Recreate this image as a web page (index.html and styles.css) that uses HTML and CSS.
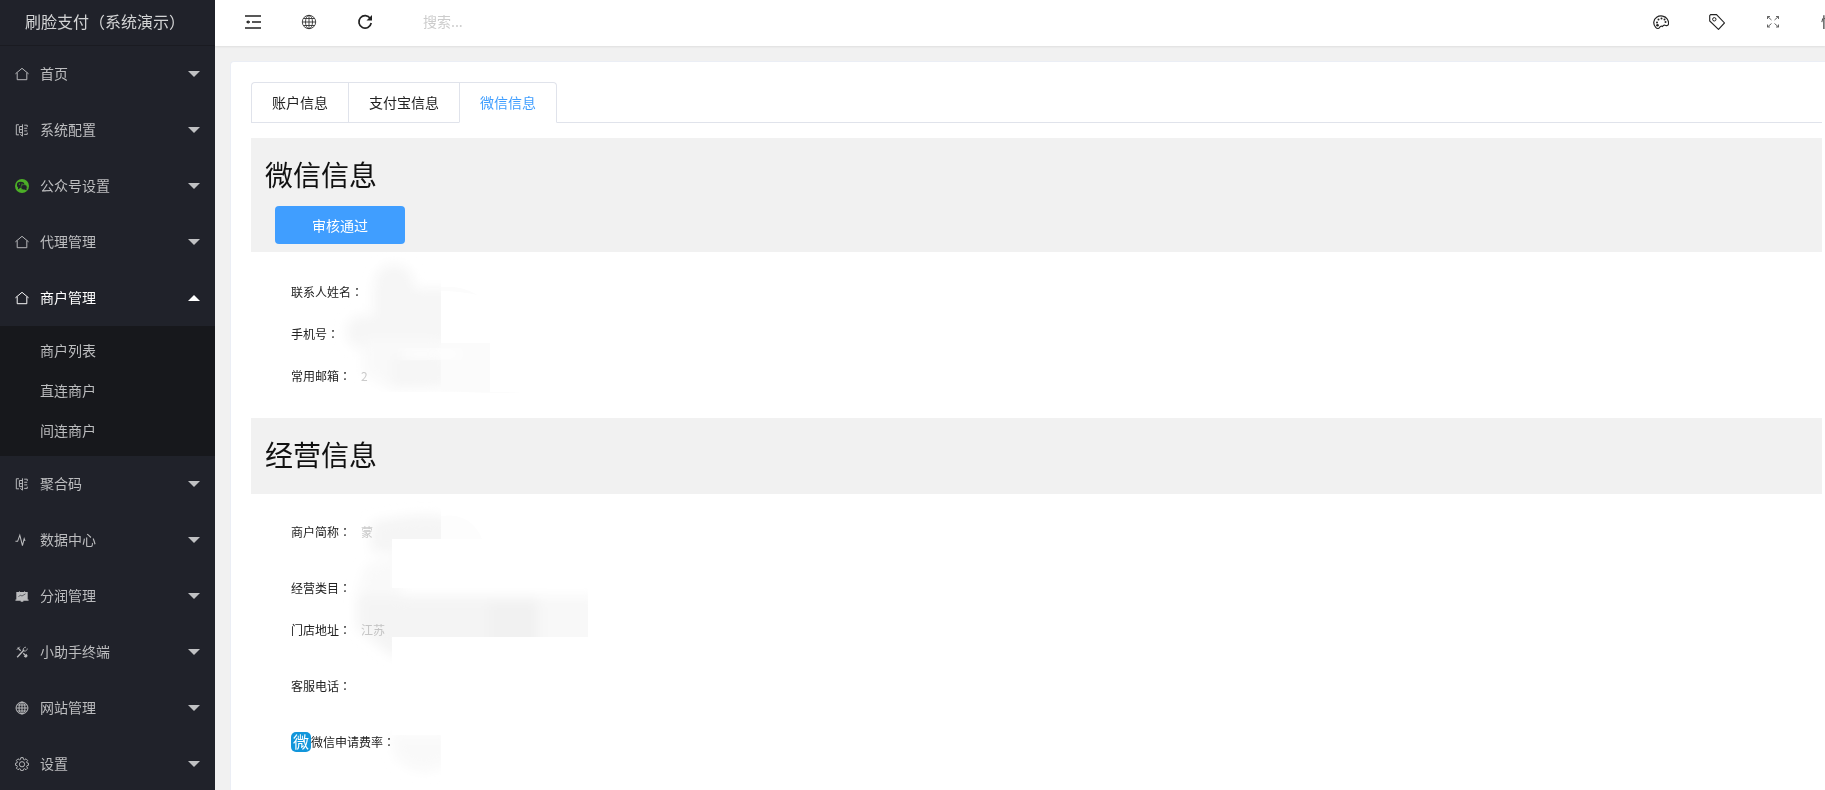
FILE: index.html
```html
<!DOCTYPE html>
<html lang="zh-CN">
<head>
<meta charset="utf-8">
<title>刷脸支付（系统演示）</title>
<link rel="stylesheet" href="styles.css">
</head>
<body>
<svg class="defs" aria-hidden="true">
  <symbol id="home" viewBox="0 0 16 16"><path d="M.5 7.800 8 1.500l7.500 6.300M2.500 6.500v8h11v-8" fill="none" stroke="currentColor" stroke-width="1.100"/></symbol>
  <symbol id="config" viewBox="0 0 16 16"><path d="M4.500 2h-3v11.500h3M5 4h3.500M5 7.500h3.500M5 11h3.500M5 4v7M8.500 1.500V15M6 13l2.500 2M10.500 2.500H14v2M10.500 6H14M10.500 9H14M10.500 13H14v-2" fill="none" stroke="currentColor" stroke-width="1.100"/></symbol>
</svg>
<div class="app">
  <aside class="side">
    <h1 class="logo">刷脸支付<b>（</b>系统演示<b>）</b></h1>
    <nav>
      <ul class="menu">
        <li><a href="#" class="item"><svg class="ico"><use href="#home"/></svg><span>首页</span><i class="caret"></i></a></li>
        <li><a href="#" class="item"><svg class="ico"><use href="#config"/></svg><span>系统配置</span><i class="caret"></i></a></li>
        <li><a href="#" class="item"><svg class="ico" viewBox="0 0 16 16"><circle cx="8" cy="8" r="8" fill="#4caf27"/><ellipse cx="6.500" cy="6.800" rx="4.300" ry="3.600" fill="#20222a"/><path d="M3.500 9 3.300 12l3-2z" fill="#20222a"/><ellipse cx="10.300" cy="9.400" rx="3.600" ry="3.100" fill="#20222a" stroke="#4caf27" stroke-width=".7"/><path d="m11 12 2.300 1-.3-2.500z" fill="#20222a"/><g fill="#4caf27"><circle cx="5" cy="5.800" r=".7"/><circle cx="8" cy="5.800" r=".7"/></g></svg><span>公众号设置</span><i class="caret"></i></a></li>
        <li><a href="#" class="item"><svg class="ico"><use href="#home"/></svg><span>代理管理</span><i class="caret"></i></a></li>
        <li>
          <a href="#" class="item open"><svg class="ico"><use href="#home"/></svg><span>商户管理</span><i class="caret"></i></a>
          <ul class="sub">
            <li><a href="#">商户列表</a></li>
            <li><a href="#">直连商户</a></li>
            <li><a href="#">间连商户</a></li>
          </ul>
        </li>
        <li><a href="#" class="item"><svg class="ico"><use href="#config"/></svg><span>聚合码</span><i class="caret"></i></a></li>
        <li><a href="#" class="item"><svg class="ico" viewBox="0 0 16 16"><path d="M.5 9.500h2.500L5.500 2.500l3 12 2-8 1 2.500" fill="none" stroke="currentColor" stroke-width="1.200"/></svg><span>数据中心</span><i class="caret"></i></a></li>
        <li><a href="#" class="item"><svg class="ico" viewBox="0 0 16 16"><path d="M1.500 3.500h3v-1h1v1h5v-1h1v1h3V12h1v1.500h-6v1h-3v-1h-6V12h1z" fill="currentColor"/><path d="m4 9 2-2 2 1 4-2.500" fill="none" stroke="#20222a" stroke-width=".7"/></svg><span>分润管理</span><i class="caret"></i></a></li>
        <li><a href="#" class="item"><svg class="ico" viewBox="0 0 16 16"><path d="m2.500 14 8-8.500M3 3l3.500 3.500M9.500 9.500 13 13" fill="none" stroke="currentColor" stroke-width="1.500"/><path d="M9.500 6.500a3 3 0 0 1 3-4M10.500 7a3 3 0 0 0 3.500-3M2 5.500 5.500 2" fill="none" stroke="currentColor" stroke-width="1"/><path d="m10 13 3-3 1.500 2.500-2 2z" fill="currentColor"/></svg><span>小助手终端</span><i class="caret"></i></a></li>
        <li><a href="#" class="item"><svg class="ico" viewBox="0 0 16 16"><g fill="none" stroke="currentColor" stroke-width="1.100"><circle cx="8" cy="8" r="6.800"/><ellipse cx="8" cy="8" rx="3.400" ry="6.800"/><path d="M8 1.500v13M1.500 8h13M2.500 4.600h11M2.500 11.400h11"/></g></svg><span>网站管理</span><i class="caret"></i></a></li>
        <li><a href="#" class="item"><svg class="ico" viewBox="0 0 16 16"><g fill="none" stroke="currentColor" stroke-width="1.100"><path d="M6.700.7h2.600l.4 2 1.200.5 1.700-1.100 1.800 1.800-1.100 1.700.5 1.200 1.700.4v2.200l-1.700.4-.5 1.200 1.100 1.700-1.800 1.800-1.700-1.100-1.200.5-.4 1.700H6.700l-.4-1.700-1.200-.5-1.700 1.100-1.800-1.800L2.700 11l-.5-1.200-1.700-.4V7.200l1.700-.4.500-1.200-1.100-1.700 1.800-1.800 1.700 1.100 1.200-.5z"/><circle cx="8" cy="8.300" r="3"/></g></svg><span>设置</span><i class="caret"></i></a></li>
      </ul>
    </nav>
  </aside>
  <div class="main">
    <header class="top">
      <button class="tool" type="button" aria-label="收起菜单"><svg viewBox="0 0 16 16"><path d="M0 2h16M7 8h9M0 14h16" fill="none" stroke="#222" stroke-width="1.500"/><path d="M1 8 3.500 6v1.300H5v1.400H3.500V10z" fill="#222"/></svg></button>
      <button class="tool" type="button" aria-label="网站"><svg viewBox="0 0 16 16"><g fill="none" stroke="#333" stroke-width=".9"><circle cx="8" cy="8" r="6.700"/><ellipse cx="8" cy="8" rx="3.500" ry="6.700"/><path d="M8 1.300v13.400M1.300 8h13.400M2.500 4.500h11M2.500 11.500h11"/></g></svg></button>
      <button class="tool" type="button" aria-label="刷新"><svg viewBox="0 0 16 16"><path d="M13.300 4.500A6.200 6.200 0 1 0 14.200 9" fill="none" stroke="#222" stroke-width="1.700"/><path d="M15 1v5.500H9.500z" fill="#222"/></svg></button>
      <input class="search" type="text" placeholder="搜索..." aria-label="搜索">
      <div class="right">
        <button class="tool" type="button" aria-label="主题"><svg viewBox="0 0 16 16"><path d="M9.500 12.500c-1.500-.8-2.800.2-3.200 1.200-.6 1.300-2.300.9-3.600-.4C-.2 10.200.2 5.500 3.700 3.200c3.600-2.300 8.500-1.300 10.500 1.800 1.500 2.400 1.600 5 .7 6.200-1 1-1.800.4-2.700.1-1.300-.5-2 0-2.700 1.200z" fill="none" stroke="#222" stroke-width="1.200"/><g fill="#222"><circle cx="4" cy="8.500" r="1"/><circle cx="5.500" cy="5.500" r="1"/><circle cx="8.500" cy="4.500" r="1"/><circle cx="11.500" cy="5.500" r="1"/><circle cx="12.500" cy="8" r="1"/><circle cx="4.500" cy="11.300" r="1.300"/></g></svg></button>
        <button class="tool" type="button" aria-label="便签"><svg viewBox="0 0 16 16"><path d="M.7 1.700 1.700.6h5.800l8 8.300-6 6.500L.7 7z" fill="none" stroke="#222" stroke-width="1.100"/><circle cx="5.300" cy="5.300" r="1.700" fill="none" stroke="#222"/></svg></button>
        <button class="tool" type="button" aria-label="全屏"><svg viewBox="0 0 16 16"><path d="M2.500 5V2.500H5M11 2.500h2.500V5M13.500 10.500V13H11M5 13H2.500v-2.500M2.500 2.500l4 3.500M13.500 2.500l-4 3.500M2.500 13l4-3.500M13.500 13l-4-3.500" fill="none" stroke="#555" stroke-width=".9"/></svg></button>
        <a class="user" href="#">快</a>
      </div>
    </header>
    <main class="card">
      <div class="tabs" role="tablist">
        <button class="tab" type="button" role="tab">账户信息</button>
        <button class="tab" type="button" role="tab">支付宝信息</button>
        <button class="tab active" type="button" role="tab" aria-selected="true">微信信息</button>
      </div>
      <section>
        <div class="band">
          <h2>微信信息</h2>
          <button class="pass" type="button">审核通过</button>
        </div>
        <dl class="info contact">
          <div class="row"><dt>联系人姓名<b>：</b></dt><dd></dd></div>
          <div class="row"><dt>手机号<b>：</b></dt><dd></dd></div>
          <div class="row"><dt>常用邮箱<b>：</b></dt><dd>2</dd></div>
          <svg class="smudge" viewBox="0 0 300 166" aria-hidden="true">
            <defs><filter id="soft" x="-20%" y="-20%" width="140%" height="140%"><feGaussianBlur stdDeviation="6"/></filter>
            <clipPath id="c1"><path d="M0 0h190v91h49v49H0z"/></clipPath></defs>
            <g clip-path="url(#c1)">
              <g fill="#f6f6f6" filter="url(#soft)"><circle cx="143" cy="32" r="20"/><path d="M122 36h80v58h-80z"/><circle cx="112" cy="80" r="17"/><path d="M112 86h78v44l-20 7h-30l-28-15z" fill="#f9f9f9"/><path d="M141 104h56v32h-56z"/></g>
              <path d="M190 91h49v49h-49z" fill="#fbfbfb"/>
              <path d="M152 98h56v8h-56z" fill="#fff" filter="url(#soft)"/>
            </g>
            <path d="M190 35q20-2 37 8-20-4-37-4zM190 140h82q-40 3-82-2z" fill="#fcfcfc"/>
          </svg>
        </dl>
      </section>
      <section>
        <div class="band short"><h2>经营信息</h2></div>
        <dl class="info">
          <div class="row"><dt>商户简称<b>：</b></dt><dd>蒙</dd></div>
          <div class="row gap"><dt>经营类目<b>：</b></dt><dd></dd></div>
          <div class="row"><dt>门店地址<b>：</b></dt><dd>江苏</dd></div>
          <div class="row gap"><dt>客服电话<b>：</b></dt><dd></dd></div>
          <div class="row gap"><dt><span class="badge">微</span>微信申请费率<b>：</b></dt><dd></dd></div>
          <svg class="smudge" viewBox="0 0 360 300" aria-hidden="true">
            <clipPath id="c2"><path d="M0 0h190v45h-49v49h196v49H141v98h49v50H80V0z"/></clipPath>
            <g clip-path="url(#c2)">
              <g filter="url(#soft)"><path d="M120 28q70-14 82 0v30h-82z" fill="#f5f5f5"/><path d="M114 72l36-14v50h-46z" fill="#f9f9f9"/><path d="M106 102h231v60H141l-35-28z" fill="#f4f4f4"/><path d="M238 108h49v50h-49z" fill="#f1f1f1"/><path d="M287 102h60v60h-60z" fill="#f8f8f8"/><path d="M140 240h60v26q-30 25-56-4z" fill="#f9f9f9"/></g>
            </g>
            <path d="M190 22q30-4 41 23h-41z" fill="#fdfdfd"/>
          </svg>
        </dl>
      </section>
    </main>
  </div>
</div>
</body>
</html>
```
FILE: styles.css
```css
* { box-sizing: border-box; }
body, h1, h2, ul, dl, dd { margin: 0; padding: 0; }
ul { list-style: none; }
a { color: inherit; text-decoration: none; }
button, input { font: inherit; color: inherit; border: 0; background: none; padding: 0; }
b { font-family: "Noto Sans CJK TC", sans-serif; font-weight: 400; }
body {
  font-family: "Noto Sans CJK SC", sans-serif;
  font-size: 14px;
  line-height: 24px;
  color: #222;
  background: #f1f1f1;
  overflow: hidden;
}
.defs { display: none; }
.app { display: flex; height: 100vh; }

.side { flex: none; width: 215px; background: #20222a; color: #bcbdbf; overflow: hidden; }
.logo {
  height: 46px;
  line-height: 42px;
  padding: 0 25px;
  font-size: 16px;
  font-weight: 400;
  color: #d2d3d4;
  white-space: nowrap;
  border-bottom: 1px solid #1a1b21;
}
.item { display: flex; align-items: center; height: 56px; padding: 0 15px; }
.ico { flex: none; width: 14px; height: 14px; margin-right: 11px; }
.item span { flex: 1; padding-bottom: 2px; }
.caret { border: 6px solid transparent; border-top-color: #c0c1c3; border-bottom: 0; }
.open { color: #fff; }
.open .caret { border-top: 0; border-bottom: 6px solid #fff; }
.sub { background: #17181c; padding: 4px 0 6px; }
.sub a { display: block; line-height: 40px; padding-left: 40px; }

.main { flex: 1; min-width: 0; display: flex; flex-direction: column; }
.top {
  flex: none;
  display: flex;
  align-items: center;
  height: 46px;
  padding: 0 0 2px 10px;
  background: #fff;
  box-shadow: 0 1px 2px rgba(0, 0, 0, .08);
}
.tool { flex: none; width: 56px; height: 44px; display: grid; place-items: center; }
.tool svg { width: 16px; height: 16px; }
.search { width: 200px; height: 44px; margin-left: 30px; padding-bottom: 2px; }
.search::placeholder { color: #ccc; opacity: 1; }
.right { display: flex; align-items: center; margin-left: auto; }
.user { width: 24px; padding: 0 0 2px 20px; overflow: hidden; white-space: nowrap; }

.card {
  flex: 1;
  margin: 15px 0 0 15px;
  padding: 20px 3px 0 20px;
  background: #fff;
  border: 1px solid #ebeef5;
  border-width: 1px 0 0 1px;
  border-radius: 4px 0 0 0;
  overflow: hidden;
}
.tabs { display: flex; height: 41px; margin-bottom: 15px; box-shadow: inset 0 -1px #e0e3eb; }
.tab { padding: 0 20px 2px; border: 1px solid #e0e3eb; border-right: 0; white-space: nowrap; }
.tab:first-child { border-top-left-radius: 4px; }
.active {
  color: #409eff;
  background: #fff;
  border-right: 1px solid #e0e3eb;
  border-bottom-color: #fff;
  border-top-right-radius: 4px;
}
.band { height: 114px; padding: 15px 14px 0; background: #f1f1f1; }
.short { height: 76px; }
h2 { font-size: 28px; line-height: 42px; font-weight: 400; color: #111; }
.pass {
  display: block;
  width: 130px;
  height: 38px;
  margin: 11px 0 0 10px;
  border-radius: 4px;
  background: #409eff;
  color: #fff;
}
.info { position: relative; padding: 17px 40px; font-size: 12px; }
.contact { padding: 19px 40px 21px; }
.row { display: flex; align-items: center; height: 42px; }
.gap { margin-top: 14px; }
.row dt { display: flex; align-items: center; }
.row dd { margin-left: 10px; color: #ccc; }
.badge {
  width: 20px;
  height: 20px;
  border-radius: 5px;
  background: #1296db;
  color: #fff;
  font-size: 16px;
  line-height: 18px;
  text-align: center;
}
.smudge { position: absolute; left: 0; top: 0; width: 360px; mix-blend-mode: multiply; }
.contact .smudge { width: 300px; }
```
